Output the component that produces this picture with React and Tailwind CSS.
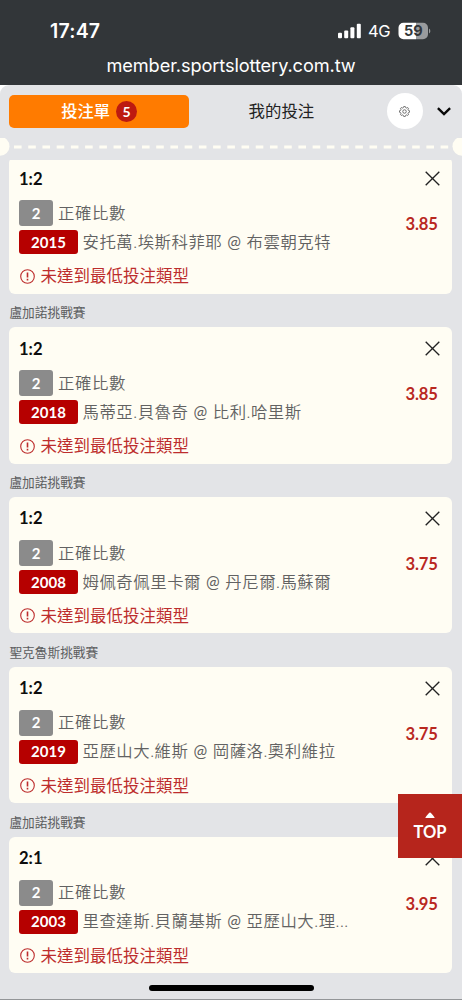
import React from "react";

const bets = [
  { league: null, score: "1:2", id: "2015", home: "安托萬.埃斯科菲耶", away: "布雲朝克特", odds: "3.85" },
  { league: "盧加諾挑戰賽", score: "1:2", id: "2018", home: "馬蒂亞.貝魯奇", away: "比利.哈里斯", odds: "3.85" },
  { league: "盧加諾挑戰賽", score: "1:2", id: "2008", home: "姆佩奇佩里卡爾", away: "丹尼爾.馬蘇爾", odds: "3.75" },
  { league: "聖克魯斯挑戰賽", score: "1:2", id: "2019", home: "亞歷山大.維斯", away: "岡薩洛.奧利維拉", odds: "3.75" },
  { league: "盧加諾挑戰賽", score: "2:1", id: "2003", home: "里查達斯.貝蘭基斯", away: "亞歷山大.理...", odds: "3.95" },
];

function StatusBar() {
  return (
    <header className="h-[84.5px] shrink-0 bg-[#323639] text-white font-['Inter','Liberation_Sans',sans-serif]">
      <div className="flex h-[50px] items-end justify-between pl-[50px] pr-[31px]">
        <span className="mb-[7px] text-[19.5px] leading-6 font-semibold tracking-[0.2px]">17:47</span>
        <div className="mb-[7px] flex h-6 items-center">
          <svg width="24" height="16" viewBox="0 0 24 16" fill="white">
            <rect x="0" y="9.7" width="4" height="5.5" rx="1" />
            <rect x="6.2" y="7.4" width="4" height="7.8" rx="1" />
            <rect x="12.4" y="4.2" width="4" height="11" rx="1" />
            <rect x="18.8" y="0.8" width="4" height="14.4" rx="1" />
          </svg>
          <span className="ml-[6px] w-[23px] text-[16.5px] font-normal tracking-[-0.3px]">4G</span>
          <svg className="ml-[7px]" width="33" height="18" viewBox="0 0 33 18">
            <path d="M5.5 .7H18V17.2H5.5A5 5 0 0 1 .5 12.2V5.7A5 5 0 0 1 5.5 .7Z" fill="white" />
            <path d="M18 .7H25A5 5 0 0 1 30 5.7V12.2A5 5 0 0 1 25 17.2H18Z" fill="#999b9d" />
            <path d="M31 6.5C32.8 7.5 32.8 10.5 31 11.5Z" fill="#999b9d" />
            <text x="15.3" y="14.2" textAnchor="middle" fontSize="14.5" fontWeight="700" fill="#323639">59</text>
          </svg>
        </div>
      </div>
      <div className="flex h-[34px] items-center justify-center pb-[4px] text-[18.2px] leading-6 whitespace-nowrap">
        <span className="tracking-[-0.1px]">member.sportslottery.com.tw</span>
      </div>
    </header>
  );
}

function Tabs() {
  return (
    <div className="bg-white">
      <nav className="flex h-[53.5px] items-center rounded-t-[9px] bg-[#e3e4e7] pl-[9.4px] pr-[10px]">
        <button className="flex h-[33px] w-[179.5px] items-center justify-center gap-[6px] rounded-[5px] bg-[#ff7b00] text-white">
          <span className="text-[16.3px] font-medium">投注單</span>
          <span className="flex size-[21px] items-center justify-center rounded-full bg-[#bd1a10] text-[14px] font-bold">5</span>
        </button>
        <button className="w-[185px] text-center text-[16.4px] text-[#222]">我的投注</button>
        <button className="ml-[13px] flex size-[36px] shrink-0 items-center justify-center rounded-full bg-white">
          <svg width="11" height="11" viewBox="0 0 22 22" fill="none" stroke="#4a4a4a" strokeWidth="1.5" strokeLinejoin="round">
            <path d="M9.3 1.2H12.7L13.4 3.4 15.4 4.2 17.5 3.1 19 4.7 18 6.8 18.7 8.7 20.9 9.4V12.6L18.7 13.3 18 15.2 19 17.3 17.4 18.9 15.3 17.8 13.4 18.6 12.7 20.8H9.3L8.6 18.6 6.7 17.8 4.6 18.9 3 17.3 4 15.2 3.3 13.3 1.1 12.6V9.4L3.3 8.7 4 6.8 3 4.7 4.6 3.1 6.7 4.2 8.6 3.4Z" />
            <circle cx="11" cy="11" r="3.5" />
          </svg>
        </button>
        <svg className="ml-[14px] shrink-0" width="14" height="9" viewBox="0 0 14 9" fill="none" stroke="#090909" strokeWidth="2.4">
          <path d="M.9 1.1 7 7 13.1 1.1" />
        </svg>
      </nav>
    </div>
  );
}

function Perforation() {
  return (
    <div className="flex h-[22px] shrink-0 items-start">
      <svg width="462" height="22" viewBox="0 0 462 22">
        <circle cx="0" cy="8.2" r="9.5" fill="#fffdf3" />
        <circle cx="462" cy="8.2" r="9.5" fill="#fffdf3" />
        <path d="M14 9H450" stroke="#fffdf3" strokeWidth="2.8" strokeDasharray="7.6 6.62" />
      </svg>
    </div>
  );
}

function BetCard({ bet }) {
  return (
    <article className="flex h-[136.5px] justify-between rounded-[6px] bg-[#fffdf3] pl-[9.6px]">
      <div className="flex flex-col">
        <h2 className="mt-[9.5px] h-6 text-[16.6px] leading-6 font-bold text-[#0d0d0d]">{bet.score}</h2>
        <div className="mt-[9.5px] flex h-[26px] items-center gap-[5px]">
          <span className="flex h-[26px] w-[34px] items-center justify-center rounded-[3px] bg-[#8b8b8b] text-[15px] font-bold text-white">2</span>
          <span className="text-[16.4px] font-[350] tracking-[0.6px] text-[#626262]">正確比數</span>
        </div>
        <div className="mt-[4px] flex h-[24px] items-center gap-[4.5px]">
          <span className="flex h-[24px] w-[59px] items-center justify-center rounded-[3px] bg-[#b60000] text-[15px] font-bold text-white">{bet.id}</span>
          <span className="whitespace-nowrap text-[16.4px] font-[350] tracking-[0.54px] text-[#626262]">
            {bet.home} <span className="font-normal">@</span> {bet.away}
          </span>
        </div>
        <p className="mt-[10px] flex h-6 items-center gap-[5.5px] pl-[1px] text-[16.5px] leading-6 text-[#bd2d2d]">
          <svg width="15" height="15" viewBox="0 0 15 15" fill="none" stroke="currentColor" strokeWidth="1.1">
            <circle cx="7.5" cy="7.5" r="6.8" />
            <path d="M7.5 3.4V8.5M7.5 9.8V11.5" strokeWidth="1.6" />
          </svg>
          <span>未達到最低投注類型</span>
        </p>
      </div>
      <div className="flex flex-col items-end">
        <svg className="mt-[14px] mr-[12.4px]" width="15" height="15" viewBox="0 0 15 15" fill="none" stroke="#222" strokeWidth="1.35">
          <path d="M.7 .7 14.3 14.3M14.3 .7 .7 14.3" />
        </svg>
        <span className="mt-[26px] mr-[14.5px] h-6 text-[16.6px] leading-6 font-bold tracking-[-0.1px] text-[#b9281f]">{bet.odds}</span>
      </div>
    </article>
  );
}

export default function App() {
  return (
    <main className="relative flex h-[1000px] w-[462px] flex-col overflow-hidden border-b border-[#939598] bg-[#e3e4e7] font-['Lato','Noto_Sans_CJK_TC',sans-serif]">
      <StatusBar />
      <Tabs />
      <Perforation />
      <section className="min-h-0 flex-1 overflow-hidden pl-[9.4px] pr-[9.6px]">
        <div className="-mt-[2.8px]">
          {bets.map((bet) => (
            <div key={bet.id}>
              {bet.league && (
                <div className="flex h-[33.35px] items-center text-[12.7px] text-[#5c5d5f]">
                  <span className="mt-[5px]">{bet.league}</span>
                </div>
              )}
              <BetCard bet={bet} />
            </div>
          ))}
        </div>
      </section>
      <button className="absolute top-[794px] right-0 flex h-[63.5px] w-[64px] flex-col items-center bg-[#b6251c] text-white">
        <svg className="mt-[18px]" width="10" height="6" viewBox="0 0 10 6" fill="white">
          <path d="M.3 6Q.6 5 3.6 1.6Q5-.4 6.4 1.6Q9.4 5 9.7 6Z" />
        </svg>
        <span className="mt-[2px] text-[16.5px] leading-6 font-bold">TOP</span>
      </button>
      <div className="absolute bottom-[8px] left-[149px] h-[6px] w-[164.5px] rounded-full bg-black" />
    </main>
  );
}
